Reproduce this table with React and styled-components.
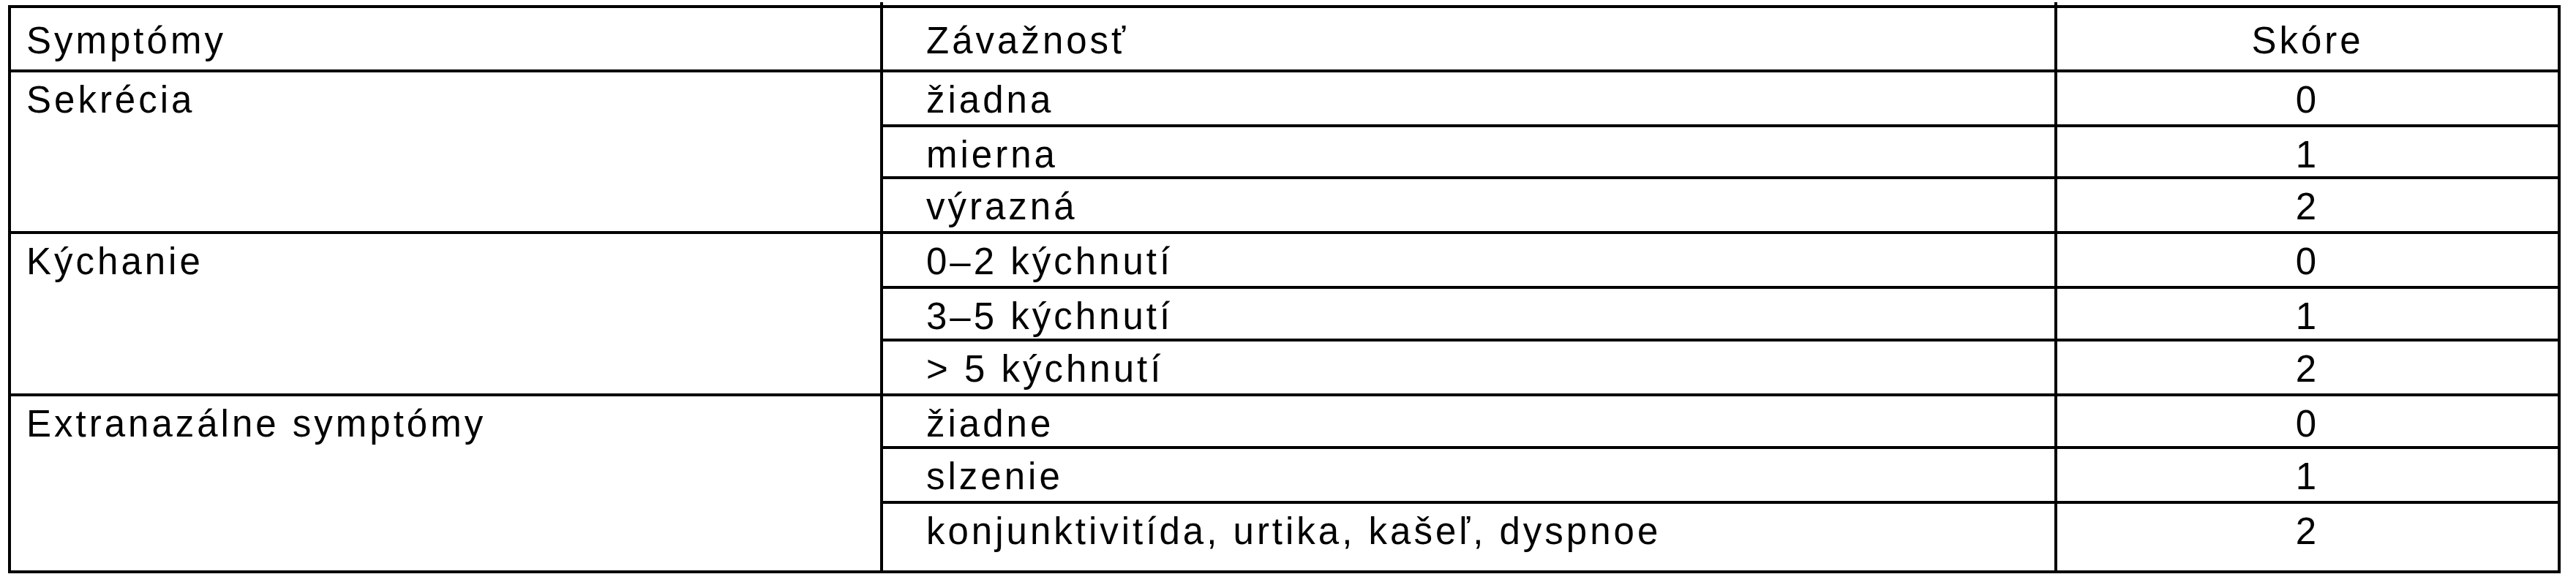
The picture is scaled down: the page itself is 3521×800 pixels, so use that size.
import styled, { createGlobalStyle } from "styled-components";

const GlobalStyle = createGlobalStyle`
  html, body {
    margin: 0;
    padding: 0;
    background: #ffffff;
  }
  body {
    font-family: "Liberation Sans", Arial, sans-serif;
    color: #000;
  }
`;

const Sheet = styled.div`
  display: grid;
  grid-template-columns: 1192px 1605px 688px;
  grid-template-rows: 88px 75px 71px 75px 75px 72px 75px 72px 75px 95px;
  width: max-content;
  margin: 7px 0 0 11px;
  border-top: 4px solid #000;
  border-left: 4px solid #000;
  font-size: 51px;
  line-height: 58px;
  letter-spacing: 4px;
`;

const Cell = styled.div`
  box-sizing: border-box;
  border-right: 4px solid #000;
  border-bottom: 4px solid #000;
  padding-top: 9px;
  white-space: nowrap;
  overflow: hidden;

  &.symptom {
    grid-column: 1;
    padding-left: 21px;
  }
  &.severity {
    grid-column: 2;
    padding-left: 59px;
  }
  &.score {
    grid-column: 3;
    text-align: center;
  }
`;

const HeadCell = styled(Cell)`
  position: relative;
  overflow: visible;
  padding-top: 16px;

  /* small overhang of the column rule above the frame */
  &.tick::after {
    content: "";
    position: absolute;
    top: -8px;
    right: -4px;
    width: 4px;
    height: 8px;
    background: #000;
  }
`;

const GroupCell = styled(Cell)`
  grid-row: span ${(p) => p.$span};
`;

const groups = [
  {
    name: "Sekrécia",
    items: [
      ["žiadna", 0],
      ["mierna", 1],
      ["výrazná", 2],
    ],
  },
  {
    name: "Kýchanie",
    items: [
      ["0–2 kýchnutí", 0],
      ["3–5 kýchnutí", 1],
      ["> 5 kýchnutí", 2],
    ],
  },
  {
    name: "Extranazálne symptómy",
    items: [
      ["žiadne", 0],
      ["slzenie", 1],
      ["konjunktivitída, urtika, kašeľ, dyspnoe", 2],
    ],
  },
];

function App() {
  return (
    <>
      <GlobalStyle />
      <Sheet>
        <HeadCell className="symptom tick">Symptómy</HeadCell>
        <HeadCell className="severity tick">Závažnosť</HeadCell>
        <HeadCell className="score">Skóre</HeadCell>
        {groups.map((g) => [
          <GroupCell key={g.name} className="symptom" $span={g.items.length}>
            {g.name}
          </GroupCell>,
          ...g.items.map(([label, score]) => [
            <Cell key={g.name + label} className="severity">
              {label}
            </Cell>,
            <Cell key={g.name + label + "s"} className="score">
              {score}
            </Cell>,
          ]),
        ])}
      </Sheet>
    </>
  );
}

export default App;
